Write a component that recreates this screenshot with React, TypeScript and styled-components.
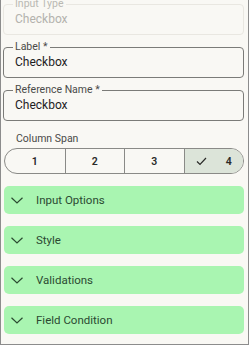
import React, { useLayoutEffect, useRef } from "react";
import styled, { createGlobalStyle } from "styled-components";

const Global = createGlobalStyle`
  html, body { margin: 0; padding: 0; background: #f9f8f4; }
  body { font-family: Roboto, "Noto Sans", sans-serif; }
  * { box-sizing: border-box; }
`;

const Frame = styled.div`
  width: 249px;
  height: 345px;
  border: 1px solid #8c8c8c;
  border-top: none;
  background: #f9f8f4;
  overflow: hidden;
`;

const Content = styled.div`
  display: flex;
  flex-direction: column;
  padding: 7px 4px 10px 2px;
`;

const Field = styled.fieldset<{ $disabled?: boolean }>`
  margin: 0 0 7px 0;
  padding: 0 11px;
  height: 36px;
  border: 1px solid ${(p) => (p.$disabled ? "#e9e7e1" : "#7b7b78")};
  border-radius: 4px;
  min-width: 0;
  legend {
    font-size: 10.5px;
    line-height: 10px;
    padding: 0 2px;
    margin-left: -2px;
    color: ${(p) => (p.$disabled ? "#b9b8b3" : "#4a4a48")};
  }
`;

const Value = styled.div<{ $disabled?: boolean }>`
  font-size: 12px;
  line-height: 16px;
  margin-top: 2px;
  color: ${(p) => (p.$disabled ? "#b3b2ad" : "#1d1c1f")};
`;

const SpanLabel = styled.div`
  font-size: 10.5px;
  line-height: 12px;
  color: #4a4a48;
  padding-left: 13px;
  margin-top: 5px;
  margin-bottom: 3px;
`;

const Segmented = styled.div`
  display: grid;
  grid-template-columns: repeat(4, 1fr);
  height: 26px;
  margin-left: 1px;
  border: 1px solid #8a8a87;
  border-radius: 13px;
  overflow: hidden;
  margin-bottom: 12px;
`;

const Segment = styled.div<{ $selected?: boolean }>`
  display: flex;
  align-items: center;
  justify-content: center;
  gap: 19px;
  font-size: 10.5px;
  font-weight: 600;
  color: #2a2a28;
  background: ${(p) => (p.$selected ? "#dce4d9" : "transparent")};
  & + & { border-left: 1px solid #8a8a87; }
`;

const Accordion = styled.div`
  display: flex;
  align-items: center;
  height: 28px;
  margin-left: 1px;
  background: #a9f5b1;
  border-radius: 5px;
  padding-left: 7px;
  margin-bottom: 12px;
  color: #2b4a31;
  font-size: 11.5px;
  svg { margin-right: 13px; }
`;

const Chevron = () => (
  <svg width="12" height="7" viewBox="0 0 12 7">
    <path d="M0.5 0.8 L6 6 L11.5 0.8" fill="none" stroke="#2b4a31" strokeWidth="1.2" />
  </svg>
);

const Check = () => (
  <svg width="11" height="9" viewBox="0 0 11 9">
    <path d="M1 4.5 L4 7.5 L10 1" fill="none" stroke="#2a2a28" strokeWidth="1.2" />
  </svg>
);

export default function App() {
  const ref = useRef<HTMLDivElement>(null);
  useLayoutEffect(() => {
    if (ref.current) ref.current.scrollTop = 8;
  }, []);
  return (
    <>
      <Global />
      <Frame ref={ref}>
        <Content>
          <Field $disabled>
            <legend>Input Type</legend>
            <Value $disabled>Checkbox</Value>
          </Field>
          <Field>
            <legend>Label *</legend>
            <Value>Checkbox</Value>
          </Field>
          <Field>
            <legend>Reference Name *</legend>
            <Value>Checkbox</Value>
          </Field>
          <SpanLabel>Column Span</SpanLabel>
          <Segmented>
            <Segment>1</Segment>
            <Segment>2</Segment>
            <Segment>3</Segment>
            <Segment $selected>
              <Check />
              4
            </Segment>
          </Segmented>
          {["Input Options", "Style", "Validations", "Field Condition"].map((t) => (
            <Accordion key={t}>
              <Chevron />
              {t}
            </Accordion>
          ))}
        </Content>
      </Frame>
    </>
  );
}
